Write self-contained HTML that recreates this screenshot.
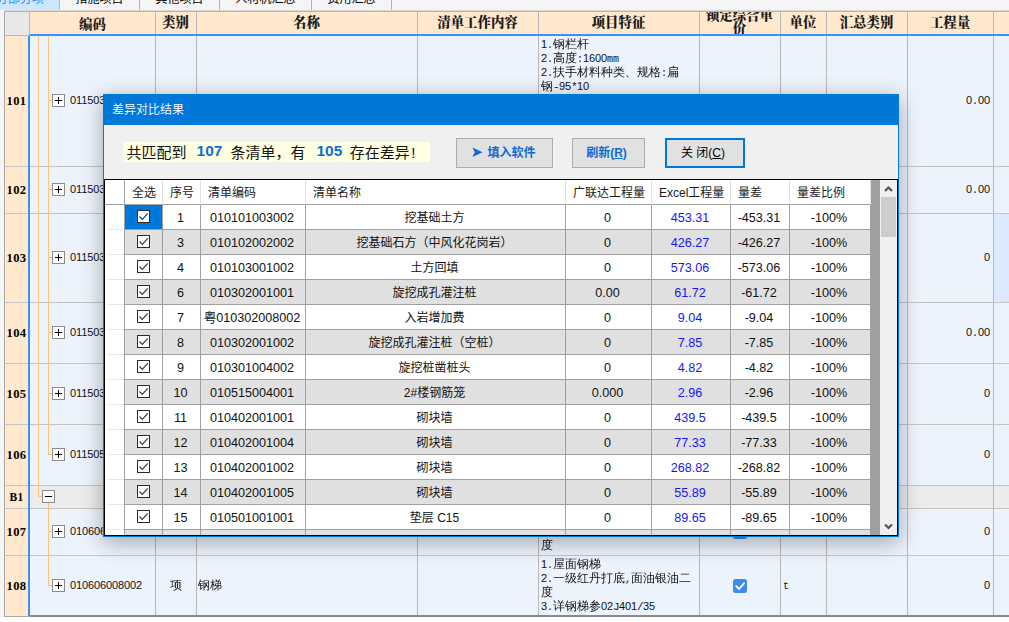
<!DOCTYPE html><html lang="zh-CN"><head><meta charset="utf-8"><title>差异对比结果</title><style>
*{box-sizing:border-box;margin:0;padding:0}
html,body{width:1009px;height:622px;overflow:hidden;background:#fff}
body{position:relative;font-family:"Liberation Sans","Noto Sans CJK SC",sans-serif;font-size:12px;color:#000}
.abs{position:absolute}
#left{left:0;top:0;width:5px;height:617px;background:#f5f5f5}
#top{left:0;top:0;width:1009px;height:12px;background:#f5f5f5;border-bottom:1px solid #dadada;height:11px}
.tab{position:absolute;top:-12px;height:22px;padding-top:2px;background:#f5f5f5;border-right:1px solid #b4b4b4;font-size:12px;line-height:19px;text-align:center;color:#000;white-space:nowrap}
.tab.sel{background:#cce8ff;color:#3388f5;border-right:1px solid #b9b9b9}
#grid{left:4px;top:11px;width:1005px;height:606px;background:#edf3fd;border-left:1px solid #a9a9a9;border-top:1px solid #b4b4b4}
.hd{position:absolute;top:12px;height:22px;background:#ffe8cc;font-family:"Liberation Serif","Noto Serif CJK SC",serif;font-weight:900;font-size:13.4px;line-height:21px;text-align:center;white-space:nowrap;color:#1a1a1a}
.vl{position:absolute;width:1px;background:#b8b8b8}
.hl{position:absolute;height:1px;background:#c4c4c4}
.rn{position:absolute;left:5px;width:23px;background:#ffe8cc;font-family:"Liberation Serif",serif;font-weight:bold;font-size:12.5px;letter-spacing:0.4px;text-align:center;color:#000}
.sim{font-family:"Liberation Sans","WenQuanYi Zen Hei","Noto Sans CJK SC",sans-serif;font-size:11px;letter-spacing:-0.12px;color:#111}
.pm{font-family:"Liberation Mono",monospace;font-size:11px;letter-spacing:-0.6px;color:#111}
.pl{font-family:"Liberation Mono",monospace;font-size:10px;letter-spacing:0;color:#111}
.fl{height:14px;line-height:14px;white-space:nowrap}
.simc{font-family:"Liberation Sans","WenQuanYi Zen Hei","Noto Sans CJK SC",sans-serif;font-size:12px;color:#111}
.box{position:absolute;width:13px;height:13px;border:1px solid #8c8c8c;background:#fff}
.box:before{content:"";position:absolute;left:2px;top:5px;width:7px;height:1px;background:#000}
.box.plus:after{content:"";position:absolute;left:5px;top:2px;width:1px;height:7px;background:#000}
.tl{position:absolute;background:#ffc37a}


#dlg{left:103px;top:94px;width:796px;height:443px;background:#f0f0f0;border:1px solid #0078d7;box-shadow:0 5px 20px 1px rgba(0,0,0,.30)}
#ttl{left:0;top:0;width:794px;height:30px;background:#0078d7;color:#fff;font-size:12px;line-height:31px;padding-left:8px;font-weight:350}
#msg{left:19px;top:47px;height:20px;width:307px;background:#ffffe1;font-size:15px;line-height:21px;white-space:nowrap;padding-left:3.5px;color:#111}
#msg b{color:#0f6fd0;font-size:15.5px;font-weight:bold;margin:0 8px 0 10px;position:relative;top:-2px}
.btn{position:absolute;top:43px;height:30px;background:#e1e1e1;border:1px solid #adadad;font-size:12px;font-weight:bold;color:#0f6ad2;text-align:center;line-height:28px;white-space:nowrap}
#tbl{left:0;top:84px;width:794px;height:357px;background:#fff;border:1px solid #000;overflow:hidden}
.c{position:absolute;height:25px;line-height:26px;font-size:12.6px;text-align:center;padding-right:4px;white-space:nowrap;border-right:1px solid #a0a0a0;border-bottom:1px solid #a0a0a0;color:#111;overflow:hidden}
.c.cn{font-size:12px}
.c.h{height:25px;line-height:27px;text-align:left;padding-left:7px;font-size:12px;border-right:1px solid #e2e2e2;border-bottom:1px solid #a0a0a0;color:#1a1a1a}
.c.g{background:#e0e0e0}
.c.bl{color:#1616f5}
.rh{position:absolute;left:2px;width:17px;height:1px;background:#e6e6e6}
.ck{position:absolute;left:12px;top:5px;width:13px;height:13px;border:1px solid #2b2b2b;background:#fff}
</style></head><body>
<div id="top" class="abs"></div><div id="left" class="abs"></div>
<div class="tab sel" style="left:0px;width:60px;text-align:left;text-indent:-4px">分部分项</div>
<div class="tab" style="left:60px;width:80px">措施项目</div>
<div class="tab" style="left:140px;width:80px">其他项目</div>
<div class="tab" style="left:220px;width:92px">人材机汇总</div>
<div class="tab" style="left:312px;width:80px">费用汇总</div>
<div id="grid" class="abs"></div>
<div class="abs" style="left:5px;top:12px;width:25px;height:24px;background:#e8e8e8;border-right:1px solid #b8b8b8;border-bottom:1px solid #b8b8b8"></div>
<div class="hd" style="left:30px;width:125px;padding-top:2px">编码</div>
<div class="hd" style="left:155px;width:41px">类别</div>
<div class="hd" style="left:196px;width:221px">名称</div>
<div class="hd" style="left:417px;width:121px">清单工作内容</div>
<div class="hd" style="left:538px;width:161px">项目特征</div>
<div class="hd" style="left:699px;width:81px;overflow:hidden"><div style="margin-top:-3px;line-height:13px">锁定综合单<br>价</div></div>
<div class="hd" style="left:780px;width:46px">单位</div>
<div class="hd" style="left:826px;width:81px">汇总类别</div>
<div class="hd" style="left:907px;width:86px">工程量</div>
<div class="hd" style="left:993px;width:16px"></div>
<div class="rn" style="top:36px;height:130px"><span style="position:absolute;left:0;width:23px;top:57px;line-height:16px;font-size:12.5px">101</span></div>
<div class="rn" style="top:166px;height:47px"><span style="position:absolute;left:0;width:23px;top:16px;line-height:16px;font-size:12.5px">102</span></div>
<div class="rn" style="top:213px;height:89px"><span style="position:absolute;left:0;width:23px;top:37px;line-height:16px;font-size:12.5px">103</span></div>
<div class="rn" style="top:302px;height:61px"><span style="position:absolute;left:0;width:23px;top:23px;line-height:16px;font-size:12.5px">104</span></div>
<div class="rn" style="top:363px;height:61px"><span style="position:absolute;left:0;width:23px;top:23px;line-height:16px;font-size:12.5px">105</span></div>
<div class="rn" style="top:424px;height:61px"><span style="position:absolute;left:0;width:23px;top:23px;line-height:16px;font-size:12.5px">106</span></div>
<div class="rn" style="top:485px;height:23px"><span style="position:absolute;left:0;width:23px;top:4px;line-height:16px;font-size:11.5px">B1</span></div>
<div class="abs" style="left:30px;top:485px;width:979px;height:23px;background:#ececec"></div>
<div class="rn" style="top:508px;height:47px"><span style="position:absolute;left:0;width:23px;top:16px;line-height:16px;font-size:12.5px">107</span></div>
<div class="rn" style="top:555px;height:61px"><span style="position:absolute;left:0;width:23px;top:23px;line-height:16px;font-size:12.5px">108</span></div>
<div class="abs" style="left:994px;top:214px;width:15px;height:88px;background:#dce9ff"></div>
<div class="vl" style="left:155px;top:12px;height:604px"></div>
<div class="vl" style="left:196px;top:12px;height:604px"></div>
<div class="vl" style="left:417px;top:12px;height:604px"></div>
<div class="vl" style="left:538px;top:12px;height:604px"></div>
<div class="vl" style="left:699px;top:12px;height:604px"></div>
<div class="vl" style="left:780px;top:12px;height:604px"></div>
<div class="vl" style="left:826px;top:12px;height:604px"></div>
<div class="vl" style="left:907px;top:12px;height:604px"></div>
<div class="vl" style="left:993px;top:12px;height:604px"></div>
<div class="hl" style="left:5px;top:166px;width:1004px"></div>
<div class="hl" style="left:5px;top:213px;width:1004px"></div>
<div class="hl" style="left:5px;top:302px;width:1004px"></div>
<div class="hl" style="left:5px;top:363px;width:1004px"></div>
<div class="hl" style="left:5px;top:424px;width:1004px"></div>
<div class="hl" style="left:5px;top:485px;width:1004px"></div>
<div class="hl" style="left:5px;top:508px;width:1004px"></div>
<div class="hl" style="left:5px;top:555px;width:1004px"></div>
<div class="abs" style="left:30px;top:34px;width:979px;height:2px;background:#3c90fb"></div>
<div class="abs" style="left:28px;top:36px;width:2px;height:580px;background:#3c90fb"></div>
<div class="abs" style="left:30px;top:615px;width:979px;height:2px;background:#8a8a8a"></div>
<div class="abs" style="left:4px;top:616px;width:26px;height:1px;background:#a9a9a9"></div>
<div class="tl" style="left:38px;top:36px;width:1px;height:460px"></div>
<div class="tl" style="left:38px;top:496px;width:5px;height:1px"></div>
<div class="tl" style="left:48px;top:36px;width:1px;height:418px"></div>
<div class="tl" style="left:48px;top:503px;width:1px;height:82px"></div>
<div class="tl" style="left:48px;top:100px;width:5px;height:1px"></div>
<div class="box plus" style="left:52px;top:94px"></div>
<div class="abs sim" style="left:70px;top:92px;line-height:16px;white-space:nowrap">011503001001</div>
<div class="abs" style="left:908px;width:82px;text-align:right;top:92px;line-height:16px"><span class="sim">0</span><span class="pl">.</span><span class="sim">00</span></div>
<div class="tl" style="left:48px;top:189px;width:5px;height:1px"></div>
<div class="box plus" style="left:52px;top:183px"></div>
<div class="abs sim" style="left:70px;top:181px;line-height:16px;white-space:nowrap">011503001002</div>
<div class="abs" style="left:908px;width:82px;text-align:right;top:181px;line-height:16px"><span class="sim">0</span><span class="pl">.</span><span class="sim">00</span></div>
<div class="tl" style="left:48px;top:257px;width:5px;height:1px"></div>
<div class="box plus" style="left:52px;top:251px"></div>
<div class="abs sim" style="left:70px;top:249px;line-height:16px;white-space:nowrap">011503001003</div>
<div class="abs" style="left:908px;width:82px;text-align:right;top:249px;line-height:16px"><span class="sim">0</span></div>
<div class="tl" style="left:48px;top:332px;width:5px;height:1px"></div>
<div class="box plus" style="left:52px;top:326px"></div>
<div class="abs sim" style="left:70px;top:324px;line-height:16px;white-space:nowrap">011503001004</div>
<div class="abs" style="left:908px;width:82px;text-align:right;top:324px;line-height:16px"><span class="sim">0</span><span class="pl">.</span><span class="sim">00</span></div>
<div class="tl" style="left:48px;top:393px;width:5px;height:1px"></div>
<div class="box plus" style="left:52px;top:387px"></div>
<div class="abs sim" style="left:70px;top:385px;line-height:16px;white-space:nowrap">011503001005</div>
<div class="abs" style="left:908px;width:82px;text-align:right;top:385px;line-height:16px"><span class="sim">0</span></div>
<div class="tl" style="left:48px;top:454px;width:5px;height:1px"></div>
<div class="box plus" style="left:52px;top:448px"></div>
<div class="abs sim" style="left:70px;top:446px;line-height:16px;white-space:nowrap">011505001001</div>
<div class="abs" style="left:908px;width:82px;text-align:right;top:446px;line-height:16px"><span class="sim">0</span></div>
<div class="box" style="left:42px;top:490px"></div>
<div class="tl" style="left:48px;top:531px;width:5px;height:1px"></div>
<div class="box plus" style="left:52px;top:525px"></div>
<div class="abs sim" style="left:70px;top:523px;line-height:16px;white-space:nowrap">010606008001</div>
<div class="abs" style="left:908px;width:82px;text-align:right;top:523px;line-height:16px"><span class="sim">0</span></div>
<div class="tl" style="left:48px;top:585px;width:5px;height:1px"></div>
<div class="box plus" style="left:52px;top:579px"></div>
<div class="abs sim" style="left:70px;top:577px;line-height:16px;white-space:nowrap">010606008002</div>
<div class="abs" style="left:908px;width:82px;text-align:right;top:577px;line-height:16px"><span class="sim">0</span></div>
<div class="abs simc" style="left:156px;width:40px;text-align:center;top:577px;line-height:16px">项</div>
<div class="abs simc" style="left:198px;top:577px;line-height:16px">钢梯</div>
<div class="abs sim" style="left:783px;top:577px;line-height:16px"><span class="pl">t</span></div>
<div class="abs simc" style="left:541px;top:37px;width:158px"><div class="fl"><span class="sim">1</span><span class="pl">.</span>钢栏杆</div><div class="fl"><span class="sim">2</span><span class="pl">.</span>高度<span class="pl">:</span><span class="sim">1600</span><span class="pl">mm</span></div><div class="fl"><span class="sim">2</span><span class="pl">.</span>扶手材料种类、规格<span class="pl">:</span>扁</div><div class="fl">钢<span class="pm">-</span><span class="sim">95</span><span class="pm">*</span><span class="sim">10</span></div><div class="fl"><span class="sim">3</span><span class="pl">.</span>立柱材料种类、规格<span class="pl">:</span>扁钢</div></div>
<div class="abs simc" style="left:541px;top:538px;width:158px"><div class="fl">度</div></div>
<div class="abs simc" style="left:541px;top:557px;width:158px"><div class="fl"><span class="sim">1</span><span class="pl">.</span>屋面钢梯</div><div class="fl"><span class="sim">2</span><span class="pl">.</span>一级红丹打底<span class="pl">,</span>面油银油二</div><div class="fl">度</div><div class="fl"><span class="sim">3</span><span class="pl">.</span>详钢梯参<span class="sim">02</span><span class="pm">J</span><span class="sim">401</span><span class="pm">/</span><span class="sim">35</span></div></div>
<svg class="abs" style="left:733px;top:525px" width="14" height="14" viewBox="0 0 14 14"><rect x="0" y="0" width="14" height="14" rx="2.5" fill="#3d8bf0"/><path d="M3.2 7.2 L6 10 L11 4.3" fill="none" stroke="#fff" stroke-width="1.8" stroke-linecap="round" stroke-linejoin="round"/></svg>
<svg class="abs" style="left:733px;top:579px" width="14" height="14" viewBox="0 0 14 14"><rect x="0" y="0" width="14" height="14" rx="2.5" fill="#3d8bf0"/><path d="M3.2 7.2 L6 10 L11 4.3" fill="none" stroke="#fff" stroke-width="1.8" stroke-linecap="round" stroke-linejoin="round"/></svg>

<div id="dlg" class="abs">
<div id="ttl" class="abs">差异对比结果</div>
<div id="msg" class="abs">共匹配到<b style="margin-left:10px">107</b>条清单，有<b style="margin-left:11px;margin-right:7.5px">105</b>存在差异<span style="margin-left:1.5px">!</span></div>
<div class="btn" style="left:352px;width:97px"><span style="font-family:'DejaVu Sans',sans-serif;font-size:15px;line-height:0;font-weight:normal;position:relative;top:-0.5px;margin-left:-3px;margin-right:1px">➤</span> 填入软件</div>
<div class="btn" style="left:468px;width:73px;padding-right:4px">刷新(<u>R</u>)</div>
<div class="btn" style="left:561px;width:80px;top:43px;height:30px;border:2px solid #0078d7;color:#000;font-weight:normal;font-size:12px;line-height:26px;padding-right:4px">关 闭(<u>C</u>)</div>
<div id="tbl" class="abs">
<div class="c h" style="left:0;top:0;width:20px"></div>
<div class="c h" style="left:20px;top:0;width:38px">全选</div>
<div class="c h" style="left:58px;top:0;width:38px">序号</div>
<div class="c h" style="left:96px;top:0;width:105px">清单编码</div>
<div class="c h" style="left:201px;top:0;width:260px">清单名称</div>
<div class="c h" style="left:461px;top:0;width:86px">广联达工程量</div>
<div class="c h" style="left:547px;top:0;width:79px">Excel工程量</div>
<div class="c h" style="left:626px;top:0;width:59px">量差</div>
<div class="c h" style="left:685px;top:0;width:81px">量差比例</div>
<div class="rh" style="top:49px"></div>
<div class="c" style="left:20px;top:25px;width:38px;background:#0078d7"><span class="ck"><svg width="11" height="11" viewBox="0 0 11 11" style="position:absolute;left:0;top:0"><path d="M1.5 5.5 L4.3 8.3 L9.7 2.3" fill="none" stroke="#3a3a3a" stroke-width="1.2"/></svg></span></div>
<div class="c" style="left:58px;top:25px;width:38px;padding-right:2px">1</div>
<div class="c" style="left:96px;top:25px;width:105px;padding-right:2px">010101003002</div>
<div class="c cn" style="left:201px;top:25px;width:260px;padding-right:2px">挖基础土方</div>
<div class="c" style="left:461px;top:25px;width:86px;padding-right:2px">0</div>
<div class="c bl" style="left:547px;top:25px;width:79px;padding-right:2px">453.31</div>
<div class="c" style="left:626px;top:25px;width:59px;padding-right:2px">-453.31</div>
<div class="c" style="left:685px;top:25px;width:81px;padding-right:2px">-100%</div>
<div class="rh" style="top:74px"></div>
<div class="c g" style="left:20px;top:50px;width:38px"><span class="ck"><svg width="11" height="11" viewBox="0 0 11 11" style="position:absolute;left:0;top:0"><path d="M1.5 5.5 L4.3 8.3 L9.7 2.3" fill="none" stroke="#3a3a3a" stroke-width="1.2"/></svg></span></div>
<div class="c g" style="left:58px;top:50px;width:38px;padding-right:2px">3</div>
<div class="c g" style="left:96px;top:50px;width:105px;padding-right:2px">010102002002</div>
<div class="c g cn" style="left:201px;top:50px;width:260px;padding-right:2px">挖基础石方（中风化花岗岩）</div>
<div class="c g" style="left:461px;top:50px;width:86px;padding-right:2px">0</div>
<div class="c g bl" style="left:547px;top:50px;width:79px;padding-right:2px">426.27</div>
<div class="c g" style="left:626px;top:50px;width:59px;padding-right:2px">-426.27</div>
<div class="c g" style="left:685px;top:50px;width:81px;padding-right:2px">-100%</div>
<div class="rh" style="top:99px"></div>
<div class="c" style="left:20px;top:75px;width:38px"><span class="ck"><svg width="11" height="11" viewBox="0 0 11 11" style="position:absolute;left:0;top:0"><path d="M1.5 5.5 L4.3 8.3 L9.7 2.3" fill="none" stroke="#3a3a3a" stroke-width="1.2"/></svg></span></div>
<div class="c" style="left:58px;top:75px;width:38px;padding-right:2px">4</div>
<div class="c" style="left:96px;top:75px;width:105px;padding-right:2px">010103001002</div>
<div class="c cn" style="left:201px;top:75px;width:260px;padding-right:2px">土方回填</div>
<div class="c" style="left:461px;top:75px;width:86px;padding-right:2px">0</div>
<div class="c bl" style="left:547px;top:75px;width:79px;padding-right:2px">573.06</div>
<div class="c" style="left:626px;top:75px;width:59px;padding-right:2px">-573.06</div>
<div class="c" style="left:685px;top:75px;width:81px;padding-right:2px">-100%</div>
<div class="rh" style="top:124px"></div>
<div class="c g" style="left:20px;top:100px;width:38px"><span class="ck"><svg width="11" height="11" viewBox="0 0 11 11" style="position:absolute;left:0;top:0"><path d="M1.5 5.5 L4.3 8.3 L9.7 2.3" fill="none" stroke="#3a3a3a" stroke-width="1.2"/></svg></span></div>
<div class="c g" style="left:58px;top:100px;width:38px;padding-right:2px">6</div>
<div class="c g" style="left:96px;top:100px;width:105px;padding-right:2px">010302001001</div>
<div class="c g cn" style="left:201px;top:100px;width:260px;padding-right:2px">旋挖成孔灌注桩</div>
<div class="c g" style="left:461px;top:100px;width:86px;padding-right:2px">0.00</div>
<div class="c g bl" style="left:547px;top:100px;width:79px;padding-right:2px">61.72</div>
<div class="c g" style="left:626px;top:100px;width:59px;padding-right:2px">-61.72</div>
<div class="c g" style="left:685px;top:100px;width:81px;padding-right:2px">-100%</div>
<div class="rh" style="top:149px"></div>
<div class="c" style="left:20px;top:125px;width:38px"><span class="ck"><svg width="11" height="11" viewBox="0 0 11 11" style="position:absolute;left:0;top:0"><path d="M1.5 5.5 L4.3 8.3 L9.7 2.3" fill="none" stroke="#3a3a3a" stroke-width="1.2"/></svg></span></div>
<div class="c" style="left:58px;top:125px;width:38px;padding-right:2px">7</div>
<div class="c" style="left:96px;top:125px;width:105px;padding-right:2px">粤010302008002</div>
<div class="c cn" style="left:201px;top:125px;width:260px;padding-right:2px">入岩增加费</div>
<div class="c" style="left:461px;top:125px;width:86px;padding-right:2px">0</div>
<div class="c bl" style="left:547px;top:125px;width:79px;padding-right:2px">9.04</div>
<div class="c" style="left:626px;top:125px;width:59px;padding-right:2px">-9.04</div>
<div class="c" style="left:685px;top:125px;width:81px;padding-right:2px">-100%</div>
<div class="rh" style="top:174px"></div>
<div class="c g" style="left:20px;top:150px;width:38px"><span class="ck"><svg width="11" height="11" viewBox="0 0 11 11" style="position:absolute;left:0;top:0"><path d="M1.5 5.5 L4.3 8.3 L9.7 2.3" fill="none" stroke="#3a3a3a" stroke-width="1.2"/></svg></span></div>
<div class="c g" style="left:58px;top:150px;width:38px;padding-right:2px">8</div>
<div class="c g" style="left:96px;top:150px;width:105px;padding-right:2px">010302001002</div>
<div class="c g cn" style="left:201px;top:150px;width:260px;padding-right:2px">旋挖成孔灌注桩（空桩）</div>
<div class="c g" style="left:461px;top:150px;width:86px;padding-right:2px">0</div>
<div class="c g bl" style="left:547px;top:150px;width:79px;padding-right:2px">7.85</div>
<div class="c g" style="left:626px;top:150px;width:59px;padding-right:2px">-7.85</div>
<div class="c g" style="left:685px;top:150px;width:81px;padding-right:2px">-100%</div>
<div class="rh" style="top:199px"></div>
<div class="c" style="left:20px;top:175px;width:38px"><span class="ck"><svg width="11" height="11" viewBox="0 0 11 11" style="position:absolute;left:0;top:0"><path d="M1.5 5.5 L4.3 8.3 L9.7 2.3" fill="none" stroke="#3a3a3a" stroke-width="1.2"/></svg></span></div>
<div class="c" style="left:58px;top:175px;width:38px;padding-right:2px">9</div>
<div class="c" style="left:96px;top:175px;width:105px;padding-right:2px">010301004002</div>
<div class="c cn" style="left:201px;top:175px;width:260px;padding-right:2px">旋挖桩凿桩头</div>
<div class="c" style="left:461px;top:175px;width:86px;padding-right:2px">0</div>
<div class="c bl" style="left:547px;top:175px;width:79px;padding-right:2px">4.82</div>
<div class="c" style="left:626px;top:175px;width:59px;padding-right:2px">-4.82</div>
<div class="c" style="left:685px;top:175px;width:81px;padding-right:2px">-100%</div>
<div class="rh" style="top:224px"></div>
<div class="c g" style="left:20px;top:200px;width:38px"><span class="ck"><svg width="11" height="11" viewBox="0 0 11 11" style="position:absolute;left:0;top:0"><path d="M1.5 5.5 L4.3 8.3 L9.7 2.3" fill="none" stroke="#3a3a3a" stroke-width="1.2"/></svg></span></div>
<div class="c g" style="left:58px;top:200px;width:38px;padding-right:2px">10</div>
<div class="c g" style="left:96px;top:200px;width:105px;padding-right:2px">010515004001</div>
<div class="c g cn" style="left:201px;top:200px;width:260px;padding-right:2px">2#楼钢筋笼</div>
<div class="c g" style="left:461px;top:200px;width:86px;padding-right:2px">0.000</div>
<div class="c g bl" style="left:547px;top:200px;width:79px;padding-right:2px">2.96</div>
<div class="c g" style="left:626px;top:200px;width:59px;padding-right:2px">-2.96</div>
<div class="c g" style="left:685px;top:200px;width:81px;padding-right:2px">-100%</div>
<div class="rh" style="top:249px"></div>
<div class="c" style="left:20px;top:225px;width:38px"><span class="ck"><svg width="11" height="11" viewBox="0 0 11 11" style="position:absolute;left:0;top:0"><path d="M1.5 5.5 L4.3 8.3 L9.7 2.3" fill="none" stroke="#3a3a3a" stroke-width="1.2"/></svg></span></div>
<div class="c" style="left:58px;top:225px;width:38px;padding-right:2px">11</div>
<div class="c" style="left:96px;top:225px;width:105px;padding-right:2px">010402001001</div>
<div class="c cn" style="left:201px;top:225px;width:260px;padding-right:2px">砌块墙</div>
<div class="c" style="left:461px;top:225px;width:86px;padding-right:2px">0</div>
<div class="c bl" style="left:547px;top:225px;width:79px;padding-right:2px">439.5</div>
<div class="c" style="left:626px;top:225px;width:59px;padding-right:2px">-439.5</div>
<div class="c" style="left:685px;top:225px;width:81px;padding-right:2px">-100%</div>
<div class="rh" style="top:274px"></div>
<div class="c g" style="left:20px;top:250px;width:38px"><span class="ck"><svg width="11" height="11" viewBox="0 0 11 11" style="position:absolute;left:0;top:0"><path d="M1.5 5.5 L4.3 8.3 L9.7 2.3" fill="none" stroke="#3a3a3a" stroke-width="1.2"/></svg></span></div>
<div class="c g" style="left:58px;top:250px;width:38px;padding-right:2px">12</div>
<div class="c g" style="left:96px;top:250px;width:105px;padding-right:2px">010402001004</div>
<div class="c g cn" style="left:201px;top:250px;width:260px;padding-right:2px">砌块墙</div>
<div class="c g" style="left:461px;top:250px;width:86px;padding-right:2px">0</div>
<div class="c g bl" style="left:547px;top:250px;width:79px;padding-right:2px">77.33</div>
<div class="c g" style="left:626px;top:250px;width:59px;padding-right:2px">-77.33</div>
<div class="c g" style="left:685px;top:250px;width:81px;padding-right:2px">-100%</div>
<div class="rh" style="top:299px"></div>
<div class="c" style="left:20px;top:275px;width:38px"><span class="ck"><svg width="11" height="11" viewBox="0 0 11 11" style="position:absolute;left:0;top:0"><path d="M1.5 5.5 L4.3 8.3 L9.7 2.3" fill="none" stroke="#3a3a3a" stroke-width="1.2"/></svg></span></div>
<div class="c" style="left:58px;top:275px;width:38px;padding-right:2px">13</div>
<div class="c" style="left:96px;top:275px;width:105px;padding-right:2px">010402001002</div>
<div class="c cn" style="left:201px;top:275px;width:260px;padding-right:2px">砌块墙</div>
<div class="c" style="left:461px;top:275px;width:86px;padding-right:2px">0</div>
<div class="c bl" style="left:547px;top:275px;width:79px;padding-right:2px">268.82</div>
<div class="c" style="left:626px;top:275px;width:59px;padding-right:2px">-268.82</div>
<div class="c" style="left:685px;top:275px;width:81px;padding-right:2px">-100%</div>
<div class="rh" style="top:324px"></div>
<div class="c g" style="left:20px;top:300px;width:38px"><span class="ck"><svg width="11" height="11" viewBox="0 0 11 11" style="position:absolute;left:0;top:0"><path d="M1.5 5.5 L4.3 8.3 L9.7 2.3" fill="none" stroke="#3a3a3a" stroke-width="1.2"/></svg></span></div>
<div class="c g" style="left:58px;top:300px;width:38px;padding-right:2px">14</div>
<div class="c g" style="left:96px;top:300px;width:105px;padding-right:2px">010402001005</div>
<div class="c g cn" style="left:201px;top:300px;width:260px;padding-right:2px">砌块墙</div>
<div class="c g" style="left:461px;top:300px;width:86px;padding-right:2px">0</div>
<div class="c g bl" style="left:547px;top:300px;width:79px;padding-right:2px">55.89</div>
<div class="c g" style="left:626px;top:300px;width:59px;padding-right:2px">-55.89</div>
<div class="c g" style="left:685px;top:300px;width:81px;padding-right:2px">-100%</div>
<div class="rh" style="top:349px"></div>
<div class="c" style="left:20px;top:325px;width:38px"><span class="ck"><svg width="11" height="11" viewBox="0 0 11 11" style="position:absolute;left:0;top:0"><path d="M1.5 5.5 L4.3 8.3 L9.7 2.3" fill="none" stroke="#3a3a3a" stroke-width="1.2"/></svg></span></div>
<div class="c" style="left:58px;top:325px;width:38px;padding-right:2px">15</div>
<div class="c" style="left:96px;top:325px;width:105px;padding-right:2px">010501001001</div>
<div class="c cn" style="left:201px;top:325px;width:260px;padding-right:2px">垫层 C15</div>
<div class="c" style="left:461px;top:325px;width:86px;padding-right:2px">0</div>
<div class="c bl" style="left:547px;top:325px;width:79px;padding-right:2px">89.65</div>
<div class="c" style="left:626px;top:325px;width:59px;padding-right:2px">-89.65</div>
<div class="c" style="left:685px;top:325px;width:81px;padding-right:2px">-100%</div>
<div class="rh" style="top:374px"></div>
<div class="c g" style="left:20px;top:350px;width:38px"></div>
<div class="c g" style="left:58px;top:350px;width:38px;padding-right:2px"></div>
<div class="c g" style="left:96px;top:350px;width:105px;padding-right:2px"></div>
<div class="c g cn" style="left:201px;top:350px;width:260px;padding-right:2px"></div>
<div class="c g" style="left:461px;top:350px;width:86px;padding-right:2px"></div>
<div class="c g bl" style="left:547px;top:350px;width:79px;padding-right:2px"></div>
<div class="c g" style="left:626px;top:350px;width:59px;padding-right:2px"></div>
<div class="c g" style="left:685px;top:350px;width:81px;padding-right:2px"></div>
<div class="abs" style="left:19px;top:0;width:1px;height:357px;background:#a0a0a0"></div>
<div class="abs" style="left:766px;top:0;width:9px;height:357px;background:#a0a0a0"></div>
<div class="abs" style="left:775px;top:0;width:17px;height:357px;background:#f0f0f0"></div>
<div class="abs" style="left:776px;top:17px;width:15px;height:40px;background:#cdcdcd"></div>
<svg class="abs" style="left:775px;top:0" width="17" height="17" viewBox="0 0 17 17"><path d="M5 11 L8.5 7.5 L12 11" fill="none" stroke="#555" stroke-width="2.2"/></svg>
<svg class="abs" style="left:775px;top:338px" width="17" height="17" viewBox="0 0 17 17"><path d="M5 6.5 L8.5 10 L12 6.5" fill="none" stroke="#555" stroke-width="2.2"/></svg>
</div>
</div>
</body></html>
